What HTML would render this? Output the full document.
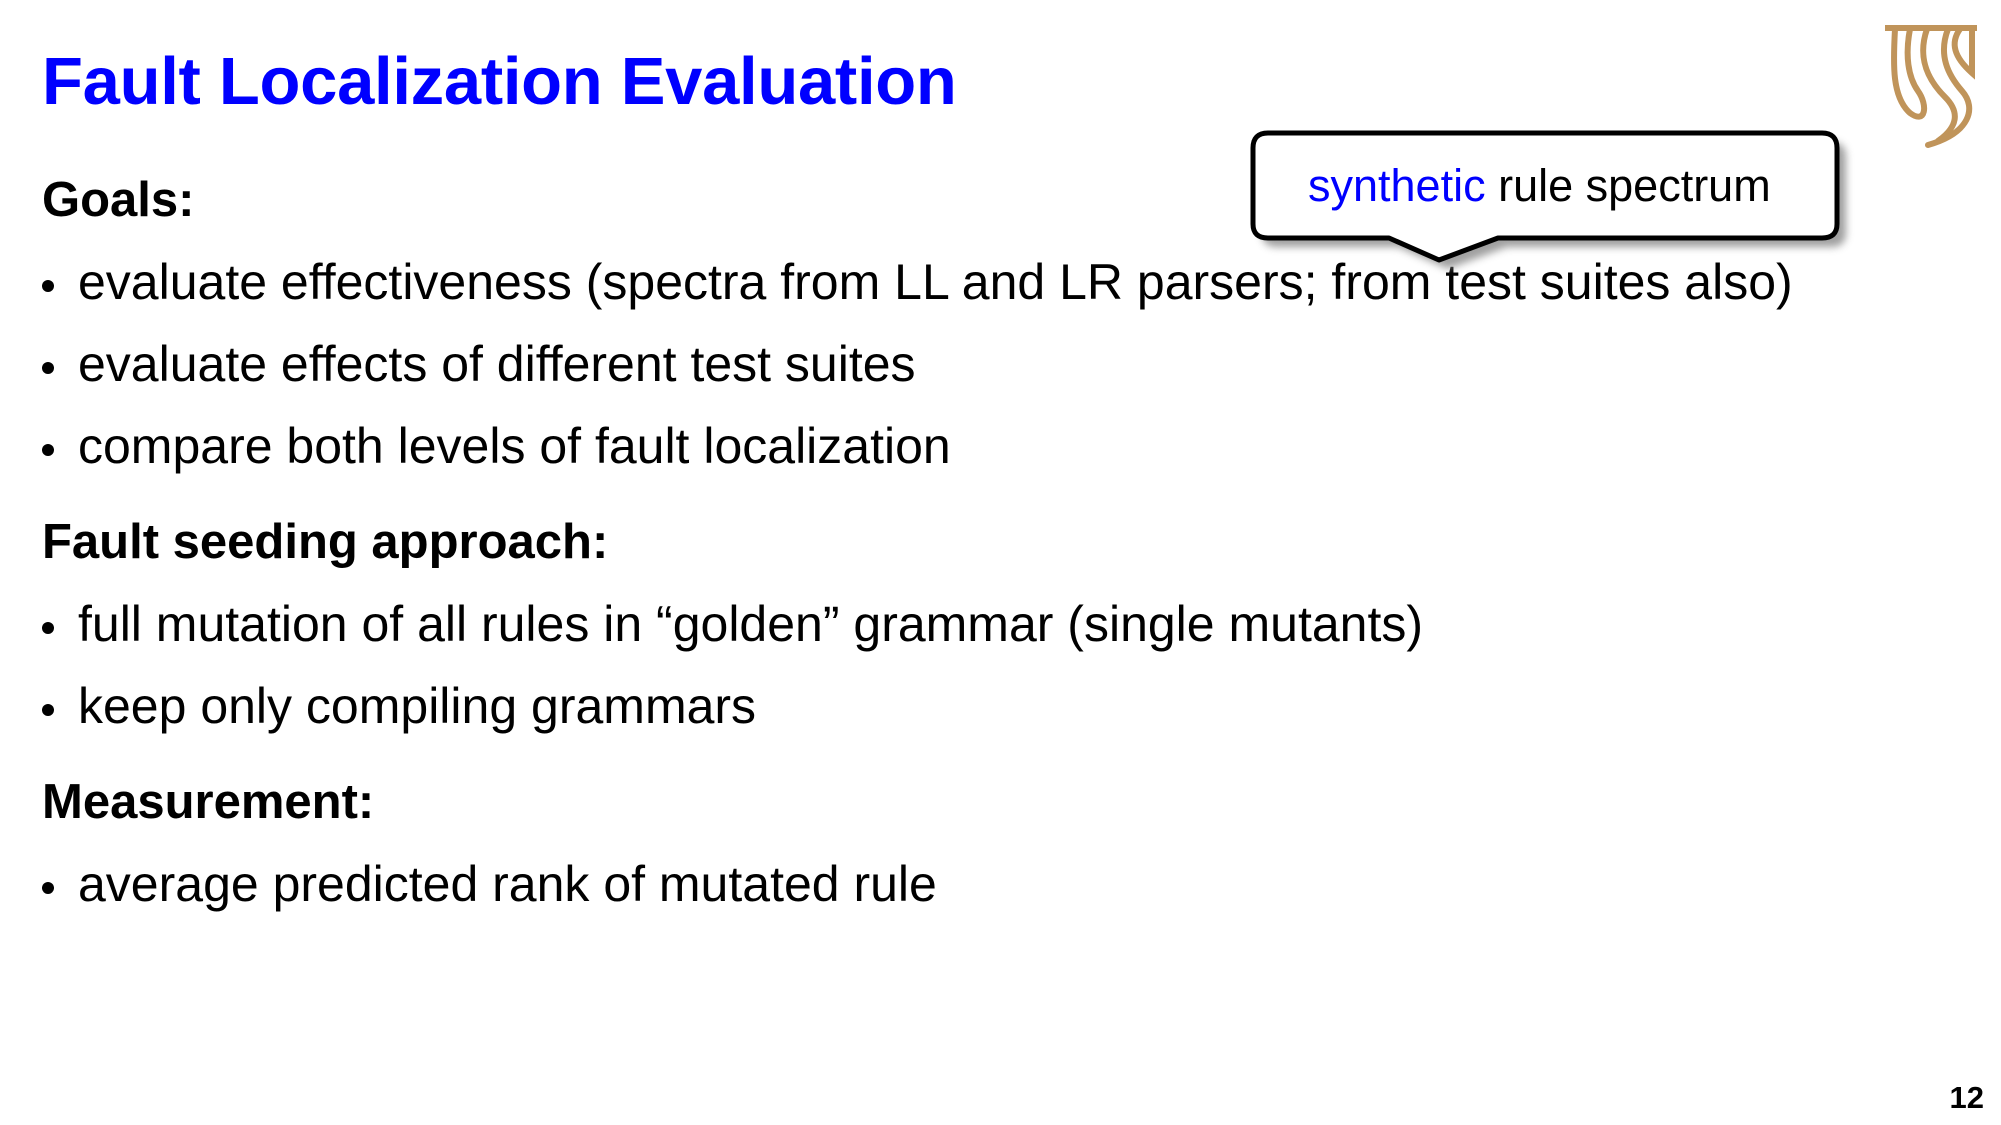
<!DOCTYPE html>
<html><head><meta charset="utf-8"><style>
html,body{margin:0;padding:0;background:#fff;}
body{width:2001px;height:1125px;position:relative;overflow:hidden;font-family:"Liberation Sans",Arial,sans-serif;color:#000;}
.t{position:absolute;white-space:nowrap;line-height:1;}
h1{position:absolute;margin:0;left:42px;top:48px;font-size:67px;font-weight:bold;color:#0000ff;line-height:1;white-space:nowrap;letter-spacing:-0.3px;}
.h{font-size:49px;font-weight:bold;left:42px;}
.b{font-size:50px;left:78px;}
.d{position:absolute;left:42px;width:12px;height:12px;border-radius:50%;background:#000;}
</style></head><body>
<h1>Fault Localization Evaluation</h1>

<div class="t h" style="top:176px">Goals:</div>
<div class="d" style="top:280px"></div><div class="t b" style="top:257px">evaluate effectiveness (spectra from LL and LR parsers; from test suites also)</div>
<div class="d" style="top:362px"></div><div class="t b" style="top:339px">evaluate effects of different test suites</div>
<div class="d" style="top:444px"></div><div class="t b" style="top:421px">compare both levels of fault localization</div>

<div class="t h" style="top:518px">Fault seeding approach:</div>
<div class="d" style="top:622px"></div><div class="t b" style="top:599px">full mutation of all rules in “golden” grammar (single mutants)</div>
<div class="d" style="top:704px"></div><div class="t b" style="top:681px">keep only compiling grammars</div>

<div class="t h" style="top:778px">Measurement:</div>
<div class="d" style="top:882px"></div><div class="t b" style="top:859px">average predicted rank of mutated rule</div>

<svg style="position:absolute;left:0;top:0" width="2001" height="1125">
<defs><filter id="s" x="-10%" y="-10%" width="130%" height="140%"><feGaussianBlur stdDeviation="4"/></filter></defs>
<path d="M1275,133 H1822 Q1837,133 1837,148 V224 Q1837,238 1822,238 H1498 L1439,260 L1389,238 H1268 Q1253,238 1253,224 V148 Q1253,133 1268,133 Z" fill="#888" transform="translate(9,9)" filter="url(#s)" opacity="0.8"/>
<path d="M1275,133 H1822 Q1837,133 1837,148 V224 Q1837,238 1822,238 H1498 L1439,260 L1389,238 H1268 Q1253,238 1253,224 V148 Q1253,133 1268,133 Z" fill="#fff" stroke="#000" stroke-width="5" stroke-linejoin="round"/>
<text x="1308" y="201" font-family="Liberation Sans, Arial, sans-serif" font-size="45"><tspan fill="#0000ff">synthetic</tspan> rule spectrum</text>
<g transform="translate(1880,15)" fill="none" stroke="#c0945a" stroke-width="6" stroke-linecap="round">
<rect x="5" y="10" width="92" height="6" fill="#c0945a" stroke="none"/>
<path d="M15,14 C13,50 12,82 30,98 C46,110 48,90 38,76 C28,62 25,40 30,14"/>
<path d="M47,14 C38,40 45,62 65,82 C80,97 78,112 58,126"/>
<path d="M68,14 C58,40 68,60 82,76 C97,93 90,118 48,130"/>
<path d="M80,14 C70,28 74,42 92,58 L92,14"/>
</g>
<text x="1984" y="1108" text-anchor="end" font-family="Liberation Sans, Arial, sans-serif" font-size="31" font-weight="bold">12</text>
</svg>
</body></html>
